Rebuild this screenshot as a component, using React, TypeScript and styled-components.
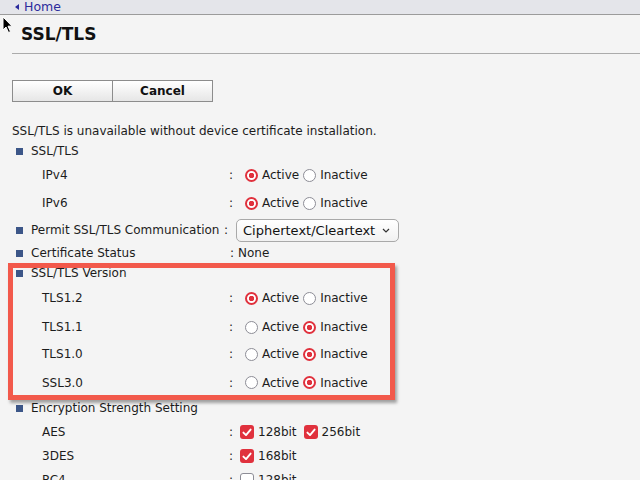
import React from 'react';
import styled, { createGlobalStyle } from 'styled-components';

const Global = createGlobalStyle`
  html, body { margin: 0; padding: 0; background: #f4f4f4; }
  body {
    font-family: "DejaVu Sans", Verdana, sans-serif;
    font-size: 12px;
    color: #1c1c1c;
    overflow: hidden;
  }
`;

const Page = styled.div`
  position: relative;
  width: 640px;
  height: 480px;
  overflow: hidden;
  background: #f4f4f4;
`;

const TopBar = styled.div`
  height: 14px;
  background: #e4e5ea;
  border-bottom: 1px solid #9b9b9b;
  display: flex;
  align-items: center;
  padding-left: 15px;
`;

const HomeLink = styled.a`
  display: flex;
  align-items: center;
  gap: 5px;
  color: #2b2b9c;
  text-decoration: none;
  font-size: 12.5px;
  line-height: 14px;
`;

const Tri = styled.span`
  width: 0;
  height: 0;
  border-top: 3px solid transparent;
  border-bottom: 3px solid transparent;
  border-right: 4px solid #2b2b9c;
`;

const Main = styled.div`
  padding-left: 12px;
`;

const Title = styled.h1`
  margin: 0;
  height: 38px;
  display: flex;
  align-items: center;
  padding-left: 9px;
  font-size: 17px;
  font-weight: bold;
  color: #111;
  border-bottom: 1px solid #ababab;
`;

const ButtonGroup = styled.div`
  display: flex;
  margin-top: 26px;
`;

const Button = styled.button`
  width: 101px;
  height: 22px;
  margin: 0;
  padding: 0;
  border: 1px solid #8c8c8c;
  background: linear-gradient(#ffffff, #e6e6e6);
  font-family: "DejaVu Sans", Verdana, sans-serif;
  font-size: 12px;
  font-weight: bold;
  color: #111;
  & + & { margin-left: -1px; }
`;

const Notice = styled.div`
  margin-top: 19px;
  height: 20px;
  line-height: 20px;
`;

const Row = styled.div<{ $h: number }>`
  height: ${(p) => p.$h}px;
  display: flex;
  align-items: center;
  white-space: nowrap;
`;

const HeadLabel = styled.div<{ $w?: number }>`
  display: flex;
  align-items: center;
  width: ${(p) => (p.$w ? `${p.$w}px` : 'auto')};
  flex: none;
`;

const Bullet = styled.span`
  width: 7px;
  height: 7px;
  background: #3c5688;
  margin: 0 8px 0 4px;
  flex: none;
`;

const SubLabel = styled.div`
  width: 217px;
  padding-left: 30px;
  box-sizing: border-box;
  flex: none;
`;

const Colon = styled.span<{ $w: number }>`
  width: ${(p) => p.$w}px;
  flex: none;
`;

const Options = styled.div<{ $gap: number }>`
  display: flex;
  align-items: center;
  gap: ${(p) => p.$gap}px;
`;

const Option = styled.label`
  display: flex;
  align-items: center;
  gap: 4px;
`;

const Radio = styled.input.attrs({ type: 'radio' })`
  appearance: none;
  width: 13px;
  height: 13px;
  margin: 0;
  border-radius: 50%;
  border: 1px solid #8d8d96;
  background: #fff;
  box-sizing: border-box;
  &:checked {
    border: 2px solid #e0313d;
    background: radial-gradient(circle, #e0313d 0 2.5px, #fff 3px);
  }
`;

const Box = styled.span<{ $on: boolean }>`
  width: 14px;
  height: 14px;
  box-sizing: border-box;
  border-radius: 3px;
  display: flex;
  align-items: center;
  justify-content: center;
  background: ${(p) => (p.$on ? '#e0313d' : '#fff')};
  border: ${(p) => (p.$on ? 'none' : '1px solid #8d8d96')};
`;

const SelectBox = styled.div`
  width: 163px;
  height: 23px;
  box-sizing: border-box;
  border: 1px solid #a9a9a9;
  border-radius: 5px;
  background: linear-gradient(#ffffff, #f1f1f1);
  display: flex;
  align-items: center;
  justify-content: space-between;
  padding: 0 8px 0 6px;
  font-size: 13px;
  color: #111;
`;

const Highlight = styled.div`
  position: absolute;
  left: 8px;
  top: 263px;
  width: 387px;
  height: 137px;
  box-sizing: border-box;
  border: 5px solid #f2594b;
  box-shadow: 2px 3px 3px rgba(0, 0, 0, 0.35);
  pointer-events: none;
`;

const Cursor = styled.svg`
  position: absolute;
  left: 2px;
  top: 16px;
`;

const Check = () => (
  <svg width="10" height="9" viewBox="0 0 10 9">
    <path d="M1.4 4.6 L4 7.1 L8.6 1.6" fill="none" stroke="#fff" strokeWidth="1.9" strokeLinecap="round" strokeLinejoin="round" />
  </svg>
);

const CheckOpt = ({ on, label }: { on: boolean; label: string }) => (
  <Option>
    <Box $on={on}>{on && <Check />}</Box>
    {label}
  </Option>
);

const RadioRow = ({ label, name, active, h }: { label: string; name: string; active: boolean; h: number }) => (
  <Row $h={h}>
    <SubLabel>{label}</SubLabel>
    <Colon $w={16}>:</Colon>
    <Options $gap={4}>
      <Option>
        <Radio name={name} defaultChecked={active} />
        Active
      </Option>
      <Option>
        <Radio name={name} defaultChecked={!active} />
        Inactive
      </Option>
    </Options>
  </Row>
);

const Header = ({ children, h }: { children: React.ReactNode; h: number }) => (
  <Row $h={h}>
    <HeadLabel>
      <Bullet />
      {children}
    </HeadLabel>
  </Row>
);

export default function App() {
  return (
    <Page>
      <Global />
      <TopBar>
        <HomeLink href="#">
          <Tri />
          Home
        </HomeLink>
      </TopBar>
      <Main>
        <Title>SSL/TLS</Title>
        <ButtonGroup>
          <Button>OK</Button>
          <Button>Cancel</Button>
        </ButtonGroup>
        <Notice>SSL/TLS is unavailable without device certificate installation.</Notice>
        <Header h={20}>SSL/TLS</Header>
        <RadioRow label="IPv4" name="ipv4" active h={28} />
        <RadioRow label="IPv6" name="ipv6" active h={28} />
        <Row $h={26}>
          <HeadLabel $w={212}>
            <Bullet />
            Permit SSL/TLS Communication
          </HeadLabel>
          <Colon $w={12}>:</Colon>
          <SelectBox>
            <span>Ciphertext/Cleartext</span>
            <svg width="8" height="5" viewBox="0 0 8 5">
              <path d="M1 1 L4 4 L7 1" fill="none" stroke="#333" strokeWidth="1.2" />
            </svg>
          </SelectBox>
        </Row>
        <Row $h={20}>
          <HeadLabel $w={218}>
            <Bullet />
            Certificate Status
          </HeadLabel>
          <Colon $w={8}>:</Colon>
          None
        </Row>
        <Header h={20}>SSL/TLS Version</Header>
        <RadioRow label="TLS1.2" name="tls12" active h={30} />
        <RadioRow label="TLS1.1" name="tls11" active={false} h={28} />
        <RadioRow label="TLS1.0" name="tls10" active={false} h={26} />
        <RadioRow label="SSL3.0" name="ssl30" active={false} h={31} />
        <Header h={20}>Encryption Strength Setting</Header>
        <Row $h={28}>
          <SubLabel>AES</SubLabel>
          <Colon $w={11}>:</Colon>
          <Options $gap={7}>
            <CheckOpt on label="128bit" />
            <CheckOpt on label="256bit" />
          </Options>
        </Row>
        <Row $h={20}>
          <SubLabel>3DES</SubLabel>
          <Colon $w={11}>:</Colon>
          <Options $gap={7}>
            <CheckOpt on label="168bit" />
          </Options>
        </Row>
        <Row $h={28}>
          <SubLabel>RC4</SubLabel>
          <Colon $w={11}>:</Colon>
          <Options $gap={7}>
            <CheckOpt on={false} label="128bit" />
          </Options>
        </Row>
      </Main>
      <Highlight />
      <Cursor width="12" height="18" viewBox="0 0 12 18">
        <path d="M1 1 L1 14 L4 11 L6.5 16.5 L8.5 15.6 L6 10.2 L10 10.2 Z" fill="#000" stroke="#fff" strokeWidth="1" />
      </Cursor>
    </Page>
  );
}
